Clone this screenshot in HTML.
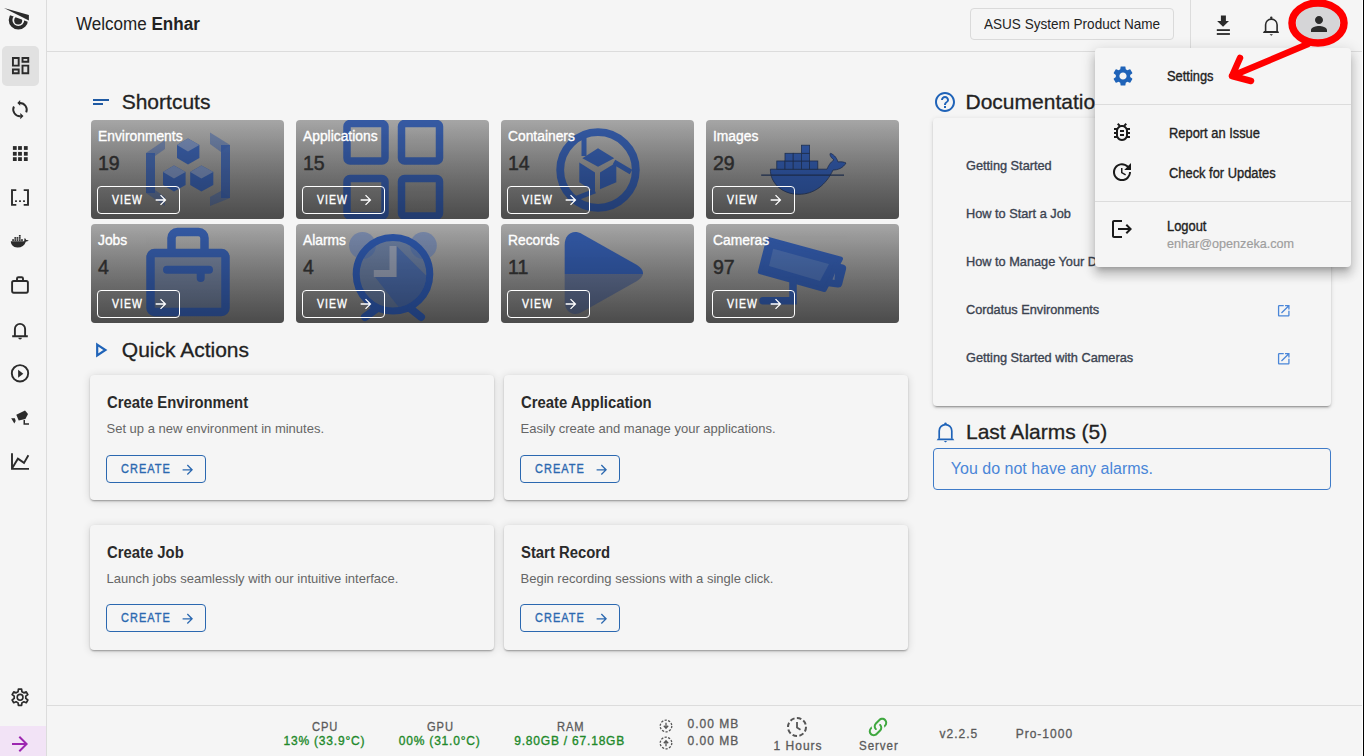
<!DOCTYPE html>
<html><head><meta charset="utf-8"><style>
*{box-sizing:border-box;margin:0;padding:0}
html,body{width:1364px;height:756px;overflow:hidden;background:#f5f5f5;font-family:"Liberation Sans",sans-serif;color:#222;position:relative}
.abs{position:absolute}
.t{position:absolute;line-height:1;white-space:nowrap}
.ic{position:absolute;overflow:visible}
.card{position:absolute;width:193px;height:99px;border-radius:4px;background:linear-gradient(#a6a6a6,#6c6c6c);overflow:hidden}
.card .ov{position:absolute;left:0;top:0;width:193px;height:99px;background:linear-gradient(rgba(0,0,0,0),rgba(0,0,0,.3))}
.card .ct{position:absolute;left:6.7px;transform:scaleX(.988);transform-origin:0 0;top:0;font-size:14px;line-height:1;color:#fff;font-weight:normal;-webkit-text-stroke-width:.35px;white-space:nowrap}
.card .cn{position:absolute;left:7.3px;top:0;font-size:21px;line-height:1;color:#2a2a2a;font-weight:normal;-webkit-text-stroke-width:.5px;transform:scaleX(.93);transform-origin:0 0}
.card .vb{position:absolute;left:6px;top:66px;width:83px;height:28px;border:1px solid #fff;border-radius:4px}
.card .vt{position:absolute;left:20.7px;transform:scaleX(.87);transform-origin:0 0;font-size:12px;line-height:1;color:#fff;font-weight:normal;-webkit-text-stroke-width:.35px;letter-spacing:1.2px}
.card svg.il{position:absolute;left:0;top:0;width:193px;height:99px;overflow:visible}
.qa{position:absolute;width:404px;height:125px;background:#f5f5f5;border-radius:4px;box-shadow:0 2px 2px -1px rgba(0,0,0,.22),0 1px 2px 0 rgba(0,0,0,.16),0 1px 8px 0 rgba(0,0,0,.14)}
.qa .qh{position:absolute;left:16.5px;transform:scaleX(.928);transform-origin:0 0;font-size:16px;line-height:1;font-weight:bold;color:#2a2a2a;white-space:nowrap}
.qa .qd{position:absolute;left:16.5px;font-size:13px;line-height:1;color:#666;white-space:nowrap}
.qa .qb{position:absolute;left:16px;top:80.5px;border-color:#3070b8;width:100px;height:28px;border:1px solid #2b68b0;border-radius:4px}
.qa .qbt{position:absolute;left:30.7px;transform:scaleX(.877);transform-origin:0 0;font-size:12.5px;line-height:1;color:#2b68b0;font-weight:normal;-webkit-text-stroke-width:.35px;letter-spacing:1.2px}
.sx{transform-origin:0 0}
</style></head><body>
<div class="abs" style="left:0;top:0;width:47px;height:756px;border-right:1px solid #dcdcdc"></div>
<div class="abs" style="left:1.5px;top:46px;width:37.5px;height:39.5px;background:#e1e1e1;border-radius:5px"></div>
<svg class="ic" style="left:0;top:0;width:47px;height:756px" viewBox="0 0 47 756">
<defs><clipPath id="logoclip"><path d="M0 11.4 L40 26.3 L40 40 L0 40 Z"/></clipPath></defs>
<g clip-path="url(#logoclip)" fill="#2b2b2b">
 <circle cx="18.35" cy="19.95" r="7.8" fill="none" stroke="#2b2b2b" stroke-width="3.7"/>
 <circle cx="18.2" cy="20.4" r="4"/>
</g>
<path d="M4 8.1 L28.9 15.0 L28.9 20.6 Z" fill="#2b2b2b"/>
<g fill="none" stroke="#2b2b2b" stroke-width="1.9">
 <!-- sync -->
 <path d="M19.9 102.95 A6.8 6.8 0 0 1 26.2 112.4"/>
 <path d="M13.9 106.5 A6.8 6.8 0 0 0 20.5 116.2"/>
 <!-- brackets -->
 <path d="M16.3 190.1 H12 V204.9 H16.3 M23.7 190.1 H28 V204.9 H23.7"/>
 <!-- briefcase -->
 <rect x="12.1" y="281" width="15.8" height="11.7" rx="1.6"/>
 <path d="M17 280.5 V278.6 a1.4 1.4 0 0 1 1.4-1.4 h3.2 a1.4 1.4 0 0 1 1.4 1.4 V280.5"/>
 <!-- bell -->
 <path d="M12.2 336.2 H27.8 M14.9 335.9 V329 a5.1 5.1 0 0 1 10.2 0 V335.9"/>
 <!-- play circle -->
 <circle cx="20" cy="373.3" r="8.2"/>
 <!-- chart -->
 <path d="M12 453.3 V468.9 H29 M12.3 468 L17.9 458.7 L24 462.9 L28.4 455.3"/>
 <!-- gear -->
 <path d="M18.08 691.72 L18.42 689.15 L21.58 689.15 L21.92 691.72 L23.87 692.85 L26.26 691.85 L27.85 694.60 L25.79 696.17 L25.79 698.43 L27.85 700.00 L26.26 702.75 L23.87 701.75 L21.92 702.88 L21.58 705.45 L18.42 705.45 L18.08 702.88 L16.13 701.75 L13.74 702.75 L12.15 700.00 L14.21 698.43 L14.21 696.17 L12.15 694.60 L13.74 691.85 L16.13 692.85 Z" stroke-width="1.7" stroke-linejoin="round"/>
 <circle cx="20.1" cy="697.3" r="2.9" stroke-width="1.6"/>
</g>
<g fill="#2b2b2b">
 <!-- dashboard -->
 <path transform="translate(9.1 54.1) scale(.958)" d="M19 5v2h-4V5h4M9 5v6H5V5h4m10 8v6h-4v-6h4M9 17v2H5v-2h4M21 3h-8v6h8V3zM11 3H3v10h8V3zm10 8h-8v10h8V11zm-10 4H3v6h8v-6z"/>
 <path d="M17.3 103.1 L20.2 100.1 L20.2 105.8 Z M23.5 116 L20.3 112.9 L20.3 119.2 Z"/>
 <!-- apps -->
 <rect x="12.9" y="146.1" width="3.8" height="3.8"/><rect x="18.1" y="146.1" width="3.8" height="3.8"/><rect x="23.9" y="146.1" width="3.8" height="3.8"/>
 <rect x="12.9" y="151.9" width="3.8" height="3.8"/><rect x="18.1" y="151.9" width="3.8" height="3.8"/><rect x="23.9" y="151.9" width="3.8" height="3.8"/>
 <rect x="12.9" y="157.2" width="3.8" height="3.8"/><rect x="18.1" y="157.2" width="3.8" height="3.8"/><rect x="23.9" y="157.2" width="3.8" height="3.8"/>
 <!-- bracket dots -->
 <rect x="15.1" y="200.3" width="1.8" height="1.7"/><rect x="19.1" y="200.3" width="1.8" height="1.7"/><rect x="23.1" y="200.3" width="1.8" height="1.7"/>
 <!-- docker -->
 <path d="M10.8 241.35 H24.2 C24.3 239.8 24.4 238.6 24.8 238.1 C25.6 238.8 26 239.5 26.1 240 C27 239.7 28 240 28.8 240.3 C28 241.2 27 241.6 25.9 241.6 C24.6 245.6 21.8 247.6 17.5 247.6 C13 247.6 10.8 244.6 10.8 241.1 Z"/>
 <rect x="12.2" y="239.2" width="1.75" height="1.7"/><rect x="14.4" y="239.2" width="1.75" height="1.7"/><rect x="16.6" y="239.2" width="1.75" height="1.7"/><rect x="18.9" y="239.2" width="1.75" height="1.7"/><rect x="21.1" y="239.2" width="1.75" height="1.7"/><rect x="14.4" y="237.1" width="1.75" height="1.7"/><rect x="16.6" y="237.1" width="1.75" height="1.7"/><rect x="18.9" y="237.1" width="1.75" height="1.7"/><rect x="18.9" y="235.0" width="1.75" height="1.7"/>
 <!-- bell clapper -->
 <path d="M18.3 337.8 H21.9 A1.8 1.6 0 0 1 18.3 337.8 Z"/>
 <!-- play triangle -->
 <path d="M18.1 369.7 L23.3 373.75 L18.1 377.8 Z"/>
 <!-- cctv -->
 <path d="M16.3 414.7 L25 410.5 L28 413.9 L25.4 419 L18.7 420.5 Z"/>
 <path d="M11.2 418.3 L14.9 418.3 L15.7 421 L14.3 423.6 Z"/>
 <path d="M23.5 419.9 H25 V423.2 H29 V424.8 H23.5 Z"/>
</g>
</svg>
<div class="abs" style="left:0;top:726px;width:46px;height:30px;background:#f2e3f6"></div>
<svg class="ic" style="left:7.6px;top:732px;width:24px;height:24px;" viewBox="0 0 24 24" fill="#9c27b0"><path d="M12 4l-1.41 1.41L16.17 11H4v2h12.17l-5.58 5.59L12 20l8-8z"/></svg>
<div class="abs" style="left:47px;top:51px;width:1317px;height:1px;background:#dcdcdc"></div>
<div class="t" style="left:76px;top:15.26px;font-size:18px;color:#222;transform:scaleX(.947);transform-origin:0 0">Welcome <b>Enhar</b></div>
<div class="abs" style="left:970px;top:8px;width:204px;height:32px;border:1px solid #dadada;border-radius:4px"></div>
<div class="t" style="left:983.7px;top:16.00px;font-size:15px;color:#222;transform:scaleX(.903);transform-origin:0 0">ASUS System Product Name</div>
<div class="abs" style="left:1190px;top:0;width:1px;height:51px;background:#dcdcdc"></div>
<svg class="ic" style="left:1200px;top:0;width:100px;height:50px" viewBox="1200 0 100 50">
<g fill="#2b2b2b">
 <rect x="1220.9" y="15.5" width="5" height="6"/>
 <path d="M1217.1 21 L1229 21 L1223.05 26.8 Z"/>
 <rect x="1216.8" y="29.2" width="13.1" height="1.8"/>
 <rect x="1216.8" y="33.1" width="13.1" height="1.8"/>
 <circle cx="1271.3" cy="17.8" r="1.2"/>
 <path d="M1269.6 34.2 H1273 L1271.3 35.8 Z"/>
 <path d="M1262.9 32.9 L1264 31 H1278.2 L1279.1 32.9 Z"/>
</g>
<path d="M1265.6 31.6 V24.85 a5.75 5.75 0 0 1 11.5 0 V31.6" fill="none" stroke="#2b2b2b" stroke-width="1.6"/>
</svg>
<div class="abs" style="left:1296px;top:5px;width:44px;height:36px;border-radius:50%;background:#d5d5d7"></div>
<svg class="ic" style="left:1306.5px;top:12.3px;width:24px;height:24px;" viewBox="0 0 24 24" fill="#2b2b2b"><path d="M12 12c2.21 0 4-1.790 4-4s-1.79-4-4-4-4 1.79-4 4 1.79 4 4 4zm0 2c-2.67 0-8 1.34-8 4v2h16v-2c0-2.66-5.33-4-8-4z"/></svg>
<!-- Shortcuts header -->
<div class="abs" style="left:93px;top:99px;width:16px;height:2px;background:#1f5aa3"></div>
<div class="abs" style="left:93px;top:103px;width:10px;height:2px;background:#1f5aa3"></div>
<div class="t" style="left:121.7px;top:91.0px;font-size:21px;color:#222;-webkit-text-stroke-width:.3px">Shortcuts</div>

<!-- cards -->
<div class="card" style="left:91px;top:120px">
 <svg class="il" viewBox="0 0 193 99"><g fill="#2b53a3" opacity=".88">
  <path d="M55 33 L74 20 L74 29 L64 36 Z" opacity=".5"/><rect x="55" y="33" width="9" height="40" opacity=".9"/><path d="M55 73 L64 70 L74 77 L74 86 Z" opacity=".5"/>
  <path d="M119 12.6 L139 25 L130 32 L119 24 Z" opacity=".5"/><rect x="130" y="25" width="9" height="53" opacity=".9"/><path d="M139 78 L119 86 L119 77 L130 71 Z" opacity=".5"/>
  <path d="M86 25 L97 18.5 L108.4 25 L108.4 38 L97 44.5 L86 38 Z"/>
  <path d="M86 25 L97 18.5 L108.4 25 L97 31.5 Z" fill="#6a80ad"/>
  <path d="M72 52 L83 45.5 L94.6 52 L94.6 65 L83 71.5 L72 65 Z"/>
  <path d="M72 52 L83 45.5 L94.6 52 L83 58.5 Z" fill="#6a80ad"/>
  <path d="M99.2 52 L110.4 45.5 L122.3 52 L122.3 65 L110.4 71.5 L99.2 65 Z"/>
  <path d="M99.2 52 L110.4 45.5 L122.3 52 L110.4 58.5 Z" fill="#6a80ad"/>
 </g></svg><div class="ov"></div>
 <div class="ct" style="top:8.6px">Environments</div><div class="cn" style="top:32.0px">19</div><div class="vb"></div><div class="vt" style="top:73.5px">VIEW</div>
 <svg class="ic" style="left:62px;top:71.5px;width:16px;height:16px" viewBox="0 0 24 24" fill="#fff"><path d="M12 4l-1.41 1.41L16.17 11H4v2h12.17l-5.58 5.59L12 20l8-8z"/></svg>
</div>
<div class="card" style="left:296px;top:120px">
 <svg class="il" viewBox="0 0 193 99"><g fill="none" stroke="#2b53a3" stroke-width="7.5" opacity=".9">
  <rect x="51" y="3.5" width="38" height="37.5" rx="3"/><rect x="105.5" y="3.5" width="38" height="37.5" rx="3"/>
  <rect x="51" y="58.5" width="38" height="37.5" rx="3"/><rect x="105.5" y="58.5" width="38" height="37.5" rx="3"/>
 </g></svg><div class="ov"></div>
 <div class="ct" style="top:8.6px">Applications</div><div class="cn" style="top:32.0px">15</div><div class="vb"></div><div class="vt" style="top:73.5px">VIEW</div>
 <svg class="ic" style="left:62px;top:71.5px;width:16px;height:16px" viewBox="0 0 24 24" fill="#fff"><path d="M12 4l-1.41 1.41L16.17 11H4v2h12.17l-5.58 5.59L12 20l8-8z"/></svg>
</div>
<div class="card" style="left:501px;top:120px">
 <svg class="il" viewBox="0 0 193 99"><g opacity=".92">
  <circle cx="97" cy="50" r="37.8" fill="none" stroke="#2b53a3" stroke-width="7.8"/>
  <path d="M81.4 38.2 L97 28.3 L113.2 38.2 L97 46.7 Z" fill="#2b53a3"/>
  <path d="M78.3 42.5 L94 52.4 L94 72.2 L78.3 62.3 Z" fill="#2b53a3"/>
  <path d="M99 52.4 L115.3 42.5 L115.3 62.3 L99 69.3 Z" fill="#2b53a3"/>
  <path d="M83 18 V36" fill="none" stroke="#2b53a3" stroke-width="5"/>
  <path d="M113 42 L130 52" fill="none" stroke="#2b53a3" stroke-width="5"/>
  <path d="M94 71 L76 78" fill="none" stroke="#2b53a3" stroke-width="5"/>
 </g></svg><div class="ov"></div>
 <div class="ct" style="top:8.6px">Containers</div><div class="cn" style="top:32.0px">14</div><div class="vb"></div><div class="vt" style="top:73.5px">VIEW</div>
 <svg class="ic" style="left:62px;top:71.5px;width:16px;height:16px" viewBox="0 0 24 24" fill="#fff"><path d="M12 4l-1.41 1.41L16.17 11H4v2h12.17l-5.58 5.59L12 20l8-8z"/></svg>
</div>
<div class="card" style="left:706px;top:120px">
 <svg class="il" viewBox="0 0 193 99"><g opacity=".95">
  <path d="M64.4 49.2 H121 C123 44 126 41 128 40 C124 37 123.5 34 124.5 33.3 C129 35 131 39 132 42 C135 41.5 138 42 140 43 C137 48 132 50 127 50 C120 65 108 74.3 93 74.3 C75 74.3 64 62 64.4 49.2 Z" fill="#2b53a3" stroke="#1c2f55" stroke-width=".8"/>
  <path d="M55.2 55.2 H138" stroke="#1c2f55" stroke-width="1.2"/>
  <g fill="#2b53a3" stroke="#1c2f55" stroke-width=".8">
  <rect x="70.8" y="41" width="8.2" height="8.2"/><rect x="79" y="41" width="8.2" height="8.2"/><rect x="87.2" y="41" width="8.2" height="8.2"/><rect x="95.4" y="41" width="8.2" height="8.2"/><rect x="103.6" y="41" width="8.2" height="8.2"/>
  <rect x="79" y="33.3" width="8.2" height="7.7"/><rect x="87.2" y="33.3" width="8.2" height="7.7"/><rect x="95.4" y="33.3" width="8.2" height="7.7"/>
  <rect x="95.4" y="25.2" width="8.2" height="8.1"/>
  </g>
 </g></svg><div class="ov"></div>
 <div class="ct" style="top:8.6px">Images</div><div class="cn" style="top:32.0px">29</div><div class="vb"></div><div class="vt" style="top:73.5px">VIEW</div>
 <svg class="ic" style="left:62px;top:71.5px;width:16px;height:16px" viewBox="0 0 24 24" fill="#fff"><path d="M12 4l-1.41 1.41L16.17 11H4v2h12.17l-5.58 5.59L12 20l8-8z"/></svg>
</div>
<div class="card" style="left:91px;top:224px">
 <svg class="il" viewBox="0 0 193 99"><g opacity=".92">
  <rect x="59.5" y="29" width="75" height="59" rx="4" fill="#3b5a96" fill-opacity=".45" stroke="#2b53a3" stroke-width="8.5"/>
  <path d="M80.5 25 V14 a6 6 0 0 1 6-6 h21 a6 6 0 0 1 6 6 V25" fill="none" stroke="#2b53a3" stroke-width="8.5"/>
  <path d="M76 45.8 H118 M109.7 46 V54" fill="none" stroke="#2b53a3" stroke-width="8" stroke-linecap="round"/>
 </g></svg><div class="ov"></div>
 <div class="ct" style="top:8.6px">Jobs</div><div class="cn" style="top:32.0px">4</div><div class="vb"></div><div class="vt" style="top:73.5px">VIEW</div>
 <svg class="ic" style="left:62px;top:71.5px;width:16px;height:16px" viewBox="0 0 24 24" fill="#fff"><path d="M12 4l-1.41 1.41L16.17 11H4v2h12.17l-5.58 5.59L12 20l8-8z"/></svg>
</div>
<div class="card" style="left:296px;top:224px">
 <svg class="il" viewBox="0 0 193 99"><g>
  <circle cx="66.5" cy="21.5" r="13.4" fill="#5f78ab" opacity=".65"/>
  <circle cx="127.4" cy="21.5" r="13.4" fill="#5f78ab" opacity=".65"/>
  <circle cx="97" cy="50.2" r="36.8" fill="#3d5c98" fill-opacity=".55" stroke="#2b53a3" stroke-width="7"/>
  <clipPath id="aclip"><circle cx="97" cy="50.2" r="33.4"/></clipPath><path d="M100.5 22 L140 61.5 L140 100 L116 100 L79 53 L100.5 53 Z" fill="#2b53a3" opacity=".5" clip-path="url(#aclip)"/>
  <path d="M97 22 V49.5 H77.8" fill="none" stroke="#8b93a6" stroke-width="7"/>
  <path d="M80 85 L69 93 M115 85 L125 93" stroke="#2b53a3" stroke-width="8" stroke-linecap="round"/>
 </g></svg><div class="ov"></div>
 <div class="ct" style="top:8.6px">Alarms</div><div class="cn" style="top:32.0px">4</div><div class="vb"></div><div class="vt" style="top:73.5px">VIEW</div>
 <svg class="ic" style="left:62px;top:71.5px;width:16px;height:16px" viewBox="0 0 24 24" fill="#fff"><path d="M12 4l-1.41 1.41L16.17 11H4v2h12.17l-5.58 5.59L12 20l8-8z"/></svg>
</div>
<div class="card" style="left:501px;top:224px">
 <svg class="il" viewBox="0 0 193 99"><g>
  <clipPath id="rtop"><rect x="0" y="0" width="193" height="50"/></clipPath>
  <clipPath id="rbot"><rect x="0" y="50" width="193" height="49"/></clipPath>
  <path d="M63.7 21 C63.7 10 72 5 81 10 L136 41 C144 46 144 52 136 57 L81 88 C72 93 63.7 88 63.7 77 Z" fill="#2b53a3" clip-path="url(#rtop)" opacity=".95"/>
  <path d="M63.7 21 C63.7 10 72 5 81 10 L136 41 C144 46 144 52 136 57 L81 88 C72 93 63.7 88 63.7 77 Z" fill="#3a5287" clip-path="url(#rbot)" opacity=".6"/>
 </g></svg><div class="ov"></div>
 <div class="ct" style="top:8.6px">Records</div><div class="cn" style="top:32.0px">11</div><div class="vb"></div><div class="vt" style="top:73.5px">VIEW</div>
 <svg class="ic" style="left:62px;top:71.5px;width:16px;height:16px" viewBox="0 0 24 24" fill="#fff"><path d="M12 4l-1.41 1.41L16.17 11H4v2h12.17l-5.58 5.59L12 20l8-8z"/></svg>
</div>
<div class="card" style="left:706px;top:224px">
 <svg class="il" viewBox="0 0 193 99"><g opacity=".95">
  <path d="M62.3 14.9 L135 34.7 L118.5 66 L53.8 48.1 Z" fill="#2b53a3" stroke="#2b53a3" stroke-width="4" stroke-linejoin="round"/>
  <path d="M67.2 24.8 L123 40 L114 57 L63 42 Z" fill="#4366a8"/>
  <path d="M128 38.5 L137 40.5 Q141 41.5 140 45.5 L136 61 Q135 64 131.5 63.5 L120 62 Z" fill="#2b53a3"/><path d="M129 49 L126.5 55.5 L128.5 56 Z" fill="#8c96aa" opacity=".7"/>
  <path d="M87 56 V76.8 H57" fill="none" stroke="#2b53a3" stroke-width="7.5" stroke-linecap="round"/>
 </g></svg><div class="ov"></div>
 <div class="ct" style="top:8.6px">Cameras</div><div class="cn" style="top:32.0px">97</div><div class="vb"></div><div class="vt" style="top:73.5px">VIEW</div>
 <svg class="ic" style="left:62px;top:71.5px;width:16px;height:16px" viewBox="0 0 24 24" fill="#fff"><path d="M12 4l-1.41 1.41L16.17 11H4v2h12.17l-5.58 5.59L12 20l8-8z"/></svg>
</div>

<!-- Quick actions -->
<svg class="ic" style="left:96px;top:343px;width:11px;height:14px" viewBox="0 0 11 14"><path d="M1.2 1.6 L9.4 7 L1.2 12.4 Z" fill="none" stroke="#1f63b8" stroke-width="2.2" stroke-linejoin="miter"/></svg>
<div class="t" style="left:121.8px;top:339.0px;font-size:21px;color:#222;-webkit-text-stroke-width:.3px">Quick Actions</div>

<div class="qa" style="left:90px;top:374.5px"><div class="qh" style="top:20px">Create Environment</div><div class="qd" style="top:47px">Set up a new environment in minutes.</div><div class="qb"></div><div class="qbt" style="top:88.4px">CREATE</div>
 <svg class="ic" style="left:89.7px;top:87px;width:15.6px;height:15.6px" viewBox="0 0 24 24" fill="#2b68b0"><path d="M12 4l-1.41 1.41L16.17 11H4v2h12.17l-5.58 5.59L12 20l8-8z"/></svg></div>
<div class="qa" style="left:504px;top:374.5px"><div class="qh" style="top:20px">Create Application</div><div class="qd" style="top:47px">Easily create and manage your applications.</div><div class="qb"></div><div class="qbt" style="top:88.4px">CREATE</div>
 <svg class="ic" style="left:89.7px;top:87px;width:15.6px;height:15.6px" viewBox="0 0 24 24" fill="#2b68b0"><path d="M12 4l-1.41 1.41L16.17 11H4v2h12.17l-5.58 5.59L12 20l8-8z"/></svg></div>
<div class="qa" style="left:90px;top:524.8px"><div class="qh" style="top:20px">Create Job</div><div class="qd" style="top:47px">Launch jobs seamlessly with our intuitive interface.</div><div class="qb" style="top:79.5px"></div><div class="qbt" style="top:87.4px">CREATE</div>
 <svg class="ic" style="left:89.7px;top:86px;width:15.6px;height:15.6px" viewBox="0 0 24 24" fill="#2b68b0"><path d="M12 4l-1.41 1.41L16.17 11H4v2h12.17l-5.58 5.59L12 20l8-8z"/></svg></div>
<div class="qa" style="left:504px;top:524.8px"><div class="qh" style="top:20px">Start Record</div><div class="qd" style="top:47px">Begin recording sessions with a single click.</div><div class="qb" style="top:79.5px"></div><div class="qbt" style="top:87.4px">CREATE</div>
 <svg class="ic" style="left:89.7px;top:86px;width:15.6px;height:15.6px" viewBox="0 0 24 24" fill="#2b68b0"><path d="M12 4l-1.41 1.41L16.17 11H4v2h12.17l-5.58 5.59L12 20l8-8z"/></svg></div>

<!-- Documentation -->
<svg class="ic" style="left:933px;top:90px;width:24px;height:24px" viewBox="0 0 24 24" fill="#1f63b8"><path d="M11 18h2v-2h-2v2zm1-16C6.48 2 2 6.48 2 12s4.48 10 10 10 10-4.48 10-10S17.52 2 12 2zm0 18c-4.41 0-8-3.59-8-8s3.59-8 8-8 8 3.590 8 8-3.59 8-8 8zm0-14c-2.21 0-4 1.79-4 4h2c0-1.1.9-2 2-2s2 .9 2 2c0 2-3 1.75-3 5h2c0-2.25 3-2.5 3-5 0-2.21-1.79-4-4-4z"/></svg>
<div class="t" style="left:965.5px;top:91.2px;font-size:21px;color:#222;-webkit-text-stroke-width:.3px">Documentation</div>
<div class="abs" style="left:933px;top:118px;width:397.5px;height:287.5px;background:#f5f5f5;border-radius:4px;box-shadow:0 3px 1px -2px rgba(0,0,0,.2),0 2px 2px 0 rgba(0,0,0,.14),0 1px 5px 0 rgba(0,0,0,.12)"></div>
<div class="t" style="left:965.8px;top:159.2px;font-size:13px;font-weight:normal;-webkit-text-stroke-width:.35px;color:#3b4350;transform:scaleX(.98);transform-origin:0 0">Getting Started</div>
<div class="t" style="left:965.8px;top:207.2px;font-size:13px;font-weight:normal;-webkit-text-stroke-width:.35px;color:#3b4350;transform:scaleX(.98);transform-origin:0 0">How to Start a Job</div>
<div class="t" style="left:965.8px;top:255.2px;font-size:13px;font-weight:normal;-webkit-text-stroke-width:.35px;color:#3b4350;transform:scaleX(.98);transform-origin:0 0">How to Manage Your Devices</div>
<div class="t" style="left:965.8px;top:303.4px;font-size:13px;font-weight:normal;-webkit-text-stroke-width:.35px;color:#3b4350;transform:scaleX(.98);transform-origin:0 0">Cordatus Environments</div>
<div class="t" style="left:965.8px;top:351.2px;font-size:13px;font-weight:normal;-webkit-text-stroke-width:.35px;color:#3b4350;transform:scaleX(.98);transform-origin:0 0">Getting Started with Cameras</div>
<svg class="ic" style="left:1275.8px;top:302.7px;width:15.5px;height:15.5px" viewBox="0 0 24 24" fill="#4a86d8"><path d="M19 19H5V5h7V3H5c-1.11 0-2 .9-2 2v14c0 1.1.89 2 2 2h14c1.1 0 2-.9 2-2v-7h-2v7zM14 3v2h3.59l-9.83 9.83 1.41 1.41L19 6.41V10h2V3h-7z"/></svg>
<svg class="ic" style="left:1275.8px;top:350.7px;width:15.5px;height:15.5px" viewBox="0 0 24 24" fill="#4a86d8"><path d="M19 19H5V5h7V3H5c-1.11 0-2 .9-2 2v14c0 1.1.89 2 2 2h14c1.1 0 2-.9 2-2v-7h-2v7zM14 3v2h3.59l-9.83 9.83 1.41 1.41L19 6.41V10h2V3h-7z"/></svg>

<!-- Last alarms -->
<svg class="ic" style="left:930px;top:415px;width:30px;height:30px" viewBox="930 415 30 30">
 <g fill="#1f63b8">
 <circle cx="945.5" cy="423.6" r="1.2"/>
 <path d="M943.8 440.9 H947.2 L945.5 442.6 Z"/>
 <path d="M936.7 440.3 L937.9 438.4 H953.1 L954.3 440.3 Z"/>
 </g>
 <path d="M939.2 438.8 V430.9 a6.3 6.3 0 0 1 12.6 0 V438.8" fill="none" stroke="#1f63b8" stroke-width="1.7"/>
</svg>
<div class="t" style="left:966px;top:421.4px;font-size:21px;color:#222;-webkit-text-stroke-width:.3px">Last Alarms (5)</div>
<div class="abs" style="left:933px;top:448px;width:398px;height:42px;border:1px solid #3f7bc8;border-radius:4px"></div>
<div class="t" style="left:950.8px;top:460.7px;font-size:16px;color:#4a86d8">You do not have any alarms.</div>

<!-- Footer -->
<div class="abs" style="left:47px;top:705px;width:1317px;height:1px;background:#dcdcdc"></div>
<div class="t" style="left:311.5px;top:720.6px;font-size:12px;color:#5a5a5a;letter-spacing:1px;-webkit-text-stroke-width:.3px;transform:scaleX(.93);transform-origin:0 0">CPU</div>
<div class="t" style="left:283.5px;top:734.5px;font-size:12px;color:#22892a;font-weight:normal;-webkit-text-stroke-width:.35px;letter-spacing:.8px">13% (33.9°C)</div>
<div class="t" style="left:426.9px;top:720.6px;font-size:12px;color:#5a5a5a;letter-spacing:1px;-webkit-text-stroke-width:.3px;transform:scaleX(.93);transform-origin:0 0">GPU</div>
<div class="t" style="left:398.8px;top:734.5px;font-size:12px;color:#22892a;font-weight:normal;-webkit-text-stroke-width:.35px;letter-spacing:.8px">00% (31.0°C)</div>
<div class="t" style="left:557px;top:720.6px;font-size:12px;color:#5a5a5a;letter-spacing:1px;-webkit-text-stroke-width:.3px;transform:scaleX(.93);transform-origin:0 0">RAM</div>
<div class="t" style="left:514.2px;top:734.5px;font-size:12px;color:#22892a;font-weight:normal;-webkit-text-stroke-width:.35px;letter-spacing:.8px">9.80GB / 67.18GB</div>
<svg class="ic" style="left:659px;top:718.5px;width:14px;height:14px" viewBox="0 0 14 14"><circle cx="7" cy="7" r="5.8" fill="none" stroke="#555" stroke-width="1.3" stroke-dasharray="2.2 1.4"/><path d="M7 3.8v5M4.8 6.8 7 9.2 9.2 6.8" fill="none" stroke="#555" stroke-width="1.3"/></svg>
<svg class="ic" style="left:659px;top:736px;width:14px;height:14px" viewBox="0 0 14 14"><circle cx="7" cy="7" r="5.8" fill="none" stroke="#555" stroke-width="1.3" stroke-dasharray="2.2 1.4"/><path d="M7 10.2v-5M4.8 7.2 7 4.8 9.2 7.2" fill="none" stroke="#555" stroke-width="1.3"/></svg>
<div class="t" style="left:687.6px;top:717.7px;font-size:12px;color:#5a5a5a;letter-spacing:1px;-webkit-text-stroke-width:.3px">0.00 MB</div>
<div class="t" style="left:687.6px;top:735.4px;font-size:12px;color:#5a5a5a;letter-spacing:1px;-webkit-text-stroke-width:.3px">0.00 MB</div>
<svg class="ic" style="left:786px;top:716px;width:22px;height:22px" viewBox="0 0 22 22"><circle cx="11" cy="11" r="9" fill="none" stroke="#555" stroke-width="2" stroke-dasharray="4.6 2.4"/><path d="M11 6v5.5l3.5 2.2" fill="none" stroke="#555" stroke-width="1.8"/></svg>
<div class="t" style="left:773.6px;top:739.8px;font-size:12px;color:#5a5a5a;letter-spacing:1px;-webkit-text-stroke-width:.3px">1 Hours</div>
<svg class="ic" style="left:866px;top:715px;width:24px;height:24px" viewBox="0 0 24 24" fill="#3fa83f"><path d="M10.59,13.41C11,13.8 11,14.44 10.59,14.83C10.2,15.22 9.56,15.22 9.17,14.83C7.22,12.88 7.22,9.71 9.17,7.76V7.76L12.71,4.22C14.66,2.27 17.83,2.27 19.78,4.22C21.73,6.17 21.73,9.34 19.78,11.29L18.29,12.78C18.3,11.96 18.17,11.14 17.89,10.36L18.36,9.88C19.54,8.71 19.54,6.81 18.36,5.64C17.19,4.46 15.29,4.46 14.12,5.64L10.59,9.17C9.41,10.34 9.41,12.24 10.59,13.41M13.41,9.17C13.8,8.78 14.44,8.78 14.83,9.17C16.78,11.12 16.78,14.29 14.83,16.24V16.24L11.29,19.78C9.34,21.73 6.17,21.73 4.22,19.78C2.27,17.83 2.27,14.66 4.22,12.71L5.71,11.22C5.7,12.04 5.83,12.86 6.11,13.65L5.64,14.12C4.46,15.29 4.46,17.19 5.64,18.36C6.81,19.54 8.71,19.54 9.88,18.36L13.41,14.83C14.59,13.66 14.59,11.76 13.41,10.59C13,10.2 13,9.56 13.41,9.17Z"/></svg>
<div class="t" style="left:859px;top:739.8px;font-size:12px;color:#5a5a5a;letter-spacing:1px;-webkit-text-stroke-width:.3px;transform:scaleX(.96);transform-origin:0 0">Server</div>
<div class="t" style="left:939.5px;top:727.7px;font-size:12px;color:#5a5a5a;letter-spacing:1px;-webkit-text-stroke-width:.3px">v2.2.5</div>
<div class="t" style="left:1015.7px;top:727.7px;font-size:12px;color:#5a5a5a;letter-spacing:1px;-webkit-text-stroke-width:.3px">Pro-1000</div>

<!-- Dropdown menu -->
<div class="abs" style="left:1095px;top:48px;width:256px;height:219px;background:#f5f5f5;border-radius:4px;box-shadow:0 5px 5px -3px rgba(0,0,0,.2),0 8px 10px 1px rgba(0,0,0,.14),0 3px 14px 2px rgba(0,0,0,.12)"></div>
<div class="abs" style="left:1095px;top:104px;width:256px;height:1px;background:#dcdcdc"></div>
<div class="abs" style="left:1095px;top:201px;width:256px;height:1px;background:#dcdcdc"></div>
<svg class="ic" style="left:1111px;top:64px;width:24px;height:24px" viewBox="0 0 24 24" fill="#1f63b8"><path d="M19.14 12.94c.04-.3.06-.61.06-.94 0-.32-.02-.64-.07-.94l2.03-1.58c.18-.14.23-.41.12-.61l-1.92-3.32c-.12-.22-.37-.29-.59-.22l-2.39.96c-.5-.38-1.03-.7-1.62-.94l-.36-2.54c-.04-.24-.24-.41-.48-.41h-3.84c-.24 0-.43.17-.47.41l-.36 2.54c-.59.24-1.13.57-1.62.94l-2.39-.96c-.22-.08-.47 0-.59.22L2.74 8.87c-.12.21-.08.47.12.61l2.03 1.58c-.05.3-.09.63-.09.94s.02.64.07.94l-2.03 1.58c-.18.14-.23.41-.12.61l1.92 3.32c.12.22.37.29.59.22l2.39-.96c.5.38 1.03.7 1.62.94l.36 2.54c.05.24.24.41.48.41h3.84c.24 0 .44-.17.47-.41l.36-2.54c.59-.24 1.13-.56 1.62-.94l2.39.96c.22.08.47 0 .59-.22l1.92-3.32c.12-.22.07-.47-.12-.61l-2.01-1.58zM12 15.6c-1.98 0-3.6-1.62-3.6-3.6s1.62-3.6 3.6-3.6 3.6 1.62 3.6 3.6-1.62 3.6-3.6 3.6z"/></svg>
<div class="t" style="left:1167.2px;top:68.4px;font-size:14px;font-weight:normal;-webkit-text-stroke-width:.35px;color:#222;transform:scaleX(.92);transform-origin:0 0;margin-top:.7px">Settings</div>
<svg class="ic" style="left:1110px;top:120px;width:24px;height:24px" viewBox="0 0 24 24" fill="#1a1a1a"><path d="M20 8h-2.81c-.45-.78-1.07-1.45-1.82-1.96L17 4.41 15.59 3l-2.17 2.17C12.96 5.06 12.49 5 12 5c-.49 0-.96.06-1.41.17L8.41 3 7 4.41l1.62 1.63C7.88 6.55 7.26 7.22 6.81 8H4v2h2.09c-.05.33-.09.66-.09 1v1H4v2h2v1c0 .34.04.67.09 1H4v2h2.81c1.04 1.79 2.97 3 5.19 3s4.15-1.21 5.19-3H20v-2h-2.09c.05-.33.09-.66.09-1v-1h2v-2h-2v-1c0-.34-.04-.67-.09-1H20V8zm-4 4v3c0 .22-.03.47-.07.7l-.1.65-.37.65c-.72 1.24-2.04 2-3.46 2s-2.74-.77-3.46-2l-.37-.64-.1-.65C8.03 15.48 8 15.23 8 15v-4c0-.23.03-.48.07-.7l.1-.65.37-.65c.3-.52.72-.97 1.21-1.31l.57-.39.74-.18c.31-.08.63-.12.94-.12.32 0 .63.04.95.12l.68.16.61.42c.5.34.91.78 1.21 1.31l.38.65.1.65c.04.22.07.47.07.69v1zm-6 2h4v2h-4zm0-4h4v2h-4z"/></svg>
<div class="t" style="left:1169.3px;top:125.75px;font-size:14px;font-weight:normal;-webkit-text-stroke-width:.35px;color:#222;transform:scaleX(.92);transform-origin:0 0">Report an Issue</div>
<svg class="ic" style="left:1110px;top:160px;width:24px;height:24px" viewBox="0 0 24 24" fill="#1a1a1a"><path d="M21,10.12H14.22L16.96,7.3C14.23,4.6 9.81,4.5 7.08,7.2C4.35,9.91 4.35,14.28 7.08,17C9.81,19.7 14.23,19.7 16.96,17C18.32,15.65 19,14.08 19,12.1H21C21,14.08 20.12,16.65 18.36,18.39C14.85,21.87 9.15,21.87 5.64,18.39C2.14,14.92 2.11,9.28 5.62,5.81C9.13,2.34 14.76,2.34 18.27,5.81L21,3V10.12M12.5,8V12.25L16,14.33L15.28,15.54L11,13V8H12.5Z"/></svg>
<div class="t" style="left:1169.3px;top:165.55px;font-size:14px;font-weight:normal;-webkit-text-stroke-width:.35px;color:#222;transform:scaleX(.92);transform-origin:0 0">Check for Updates</div>
<svg class="ic" style="left:1110px;top:217px;width:24px;height:24px" viewBox="0 0 24 24" fill="#1a1a1a"><path d="M17 7l-1.41 1.41L18.17 11H8v2h10.17l-2.58 2.58L17 17l5-5zM4 5h8V3H4c-1.1 0-2 .9-2 2v14c0 1.1.9 2 2 2h8v-2H4V5z"/></svg>
<div class="t" style="left:1167.4px;top:218.65px;font-size:14px;font-weight:normal;-webkit-text-stroke-width:.35px;color:#222;transform:scaleX(.92);transform-origin:0 0">Logout</div>
<div class="t" style="left:1167.4px;top:236.6px;font-size:13px;color:#9e9e9e;-webkit-text-stroke-width:.2px;transform:scaleX(.97);transform-origin:0 0">enhar@openzeka.com</div>

<!-- right edge -->
<div class="abs" style="left:1362px;top:0;width:1px;height:756px;background:#fff"></div>
<div class="abs" style="left:1363px;top:0;width:1px;height:756px;background:#000"></div>

<!-- red annotation -->
<svg class="ic" style="left:0;top:0;width:1364px;height:756px" viewBox="0 0 1364 756">
 <ellipse cx="1318" cy="23" rx="26" ry="20" fill="none" stroke="#f00" stroke-width="7.5"/>
 <path d="M1308 44 L1232 76 M1232 76 L1240 58 M1232 76 L1251 81" fill="none" stroke="#f00" stroke-width="6.5" stroke-linecap="round" stroke-linejoin="round"/>
</svg>
</body></html>
